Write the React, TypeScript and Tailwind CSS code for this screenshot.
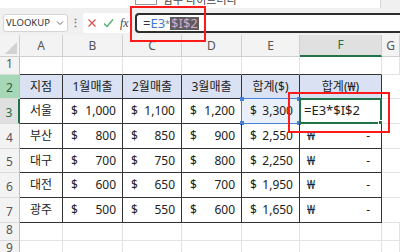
import React from 'react';

const colW = ['w-[20px]', 'w-[43px]', 'w-[60px]', 'w-[59px]', 'w-[60px]', 'w-[58px]', 'w-[82px]', 'w-[18px]'];
const letters = ['A', 'B', 'C', 'D', 'E', 'F', 'G'];

const headers = ['지점', '1월매출', '2월매출', '3월매출', '합계($)', '합계(₩)'];
const data = [
  ['서울', '1,000', '1,100', '1,200', '3,300'],
  ['부산', '800', '850', '900', '2,550'],
  ['대구', '700', '750', '800', '2,250'],
  ['대전', '600', '650', '700', '1,950'],
  ['광주', '500', '550', '600', '1,650'],
];
const rowH = ['h-[25px]', 'h-[25px]', 'h-[24px]', 'h-[25px]', 'h-[25px]'];

const RowHead = ({ n, h, active, green }: { n: number; h: string; active?: boolean; green?: boolean }) => (
  <div
    className={`${colW[0]} ${h} shrink-0 flex items-end justify-center pb-[1px] border-b border-[#dadada] text-[12px] ${
      active
        ? 'bg-[#e0e0e0] text-[#217346] border-r-2 border-r-[#217346]'
        : green
        ? 'bg-[#a6d8b8] text-[#2d5a3d] border-r border-r-[#bdbdbd]'
        : 'bg-[#f3f3f3] text-[#555] border-r border-r-[#bdbdbd]'
    }`}
  >
    {n}
  </div>
);

const Money = ({ v }: { v: string }) => (
  <div className="flex w-full justify-between pl-[8px] pr-[6px]">
    <span>$</span>
    <span>{v}</span>
  </div>
);

const EmptyRow = ({ n, h, dark }: { n: number; h: string; dark?: boolean }) => (
  <div className="flex">
    <RowHead n={n} h={h} />
    {colW.slice(1).map((w, i) => (
      <div
        key={i}
        className={`${w} ${h} shrink-0 border-r border-[#e3e3e3] border-b ${
          dark && i < 6 ? 'border-b-[#333]' : 'border-b-[#e3e3e3]'
        }`}
      />
    ))}
  </div>
);

export default function App() {
  return (
    <div className="relative w-[400px] h-[252px] overflow-hidden bg-white text-[#222] font-['Noto_Sans','Noto_Sans_CJK_KR',sans-serif]">
      {/* ribbon bottom strip */}
      <div className="flex h-[8px] bg-[#f0f0f0]">
        <div className="w-[381px] h-full bg-white border-r border-[#d6d6d6] relative overflow-hidden">
          <div className="absolute left-[135px] top-[-6px] w-[22px] h-[11px] border border-[#9a9a9a] bg-white" />
          <div className="absolute left-[163px] top-[-7px] text-[11px] leading-[14px] text-[#444]">함수 라이브러리</div>
        </div>
      </div>

      {/* formula bar */}
      <div className="flex h-[27px] bg-[#f0f0f0]">
        <div className="ml-[3px] mt-[6px] w-[65px] h-[18px] bg-white border border-[#d4d4d4] rounded-[3px] flex items-center justify-between pl-[2px] pr-[3px] text-[9.5px] text-[#333]">
          <span>VLOOKUP</span>
          <svg width="8" height="8" viewBox="0 0 8 8" fill="none" stroke="#666" strokeWidth="1">
            <path d="M1 2.5 L4 5.5 L7 2.5" />
          </svg>
        </div>
        <div className="w-[15px] mt-[6px] h-[18px] flex items-center justify-center text-[#777] text-[11px] font-bold">⋮</div>
        <div className="mt-[5px] w-[47px] h-[20px] bg-white rounded-[3px] flex items-center gap-[6px] pl-[4px]">
          <svg width="10" height="10" viewBox="0 0 10 10" stroke="#e05252" strokeWidth="1.3" fill="none">
            <path d="M1.5 1.5 L8.5 8.5 M8.5 1.5 L1.5 8.5" />
          </svg>
          <svg width="11" height="10" viewBox="0 0 11 10" stroke="#4caf6a" strokeWidth="1.3" fill="none">
            <path d="M1 5.5 L4 8.5 L10 1.5" />
          </svg>
          <span className="font-['Liberation_Serif',serif] italic text-[12px] text-[#444]">fx</span>
        </div>
        <div className="ml-[5px] mt-[5px] flex-1 h-[20px] bg-white border-2 border-[#2e2e2e] border-r-0 rounded-l-[4px] flex items-center pl-[6px] text-[13px] leading-none">
          <span className="text-[#333]">=</span>
          <span className="text-[#3b78d8]">E3</span>
          <span className="text-[#777] text-[9px]">*</span>
          <span className="bg-[#5d5d5d] text-[#d7a8cf] px-[1px]">$I$2</span>
        </div>
      </div>

      {/* column headers */}
      <div className="flex h-[22px] bg-[#f3f3f3]">
        <div className={`${colW[0]} h-full shrink-0 relative border-r border-b border-[#cfcfcf]`}>
          <div className="absolute right-[2px] bottom-[2px] w-0 h-0 border-l-[12px] border-l-transparent border-b-[12px] border-b-[#d2d2d2]" />
        </div>
        {letters.map((l, i) => (
          <div
            key={l}
            className={`${colW[i + 1]} h-full shrink-0 flex items-center justify-center text-[12px] ${
              l === 'F'
                ? 'bg-[#e0e0e0] text-[#217346] border-b-2 border-[#217346] border-r border-r-[#cfcfcf]'
                : 'text-[#555] border-r border-b border-[#cfcfcf]'
            }`}
          >
            {l}
          </div>
        ))}
      </div>

      {/* row 1 */}
      <EmptyRow n={1} h="h-[18px]" dark />

      {/* row 2 header */}
      <div className="flex">
        <RowHead n={2} h="h-[24px]" green />
        {headers.map((t, i) => (
          <div
            key={t}
            className={`${colW[i + 1]} h-[24px] shrink-0 flex items-center justify-center bg-[#d9e1f2] border-r border-b border-[#333] text-[12px]`}
          >
            {t}
          </div>
        ))}
        <div className={`${colW[7]} h-[24px] shrink-0 border-b border-[#e3e3e3]`} />
      </div>

      {/* data rows */}
      {data.map((r, ri) => (
        <div key={r[0]} className="flex">
          <RowHead n={ri + 3} h={rowH[ri]} active={ri === 0} />
          <div className={`${colW[1]} ${rowH[ri]} shrink-0 flex items-center justify-center border-r border-b border-[#333] text-[12px]`}>
            {r[0]}
          </div>
          {r.slice(1).map((v, ci) => (
            <div
              key={ci}
              className={`${colW[ci + 2]} ${rowH[ri]} shrink-0 relative flex items-center border-r border-b border-[#333] text-[12px] ${
                ri === 0 && ci === 3 ? 'bg-[#eaf0fa]' : ''
              }`}
            >
              <Money v={v} />
              {ri === 0 && ci === 3 && (
                <div className="absolute inset-[-1px] border border-[#4a7fd6]">
                  <div className="absolute left-[-2px] top-[-2px] w-[4px] h-[4px] bg-[#4a7fd6]" />
                  <div className="absolute right-[-2px] top-[-2px] w-[4px] h-[4px] bg-[#4a7fd6]" />
                  <div className="absolute left-[-2px] bottom-[-2px] w-[4px] h-[4px] bg-[#4a7fd6]" />
                  <div className="absolute right-[-2px] bottom-[-2px] w-[4px] h-[4px] bg-[#4a7fd6]" />
                </div>
              )}
            </div>
          ))}
          <div className={`${colW[6]} ${rowH[ri]} shrink-0 relative flex items-center border-r border-b border-[#333] text-[12px]`}>
            {ri === 0 ? (
              <>
                <span className="pl-[4px] text-[13px]">=E3*$I$2</span>
                <div className="absolute inset-[-1px] border-2 border-[#217346]">
                  <div className="absolute right-[-3px] bottom-[-3px] w-[5px] h-[5px] bg-[#217346] border border-white" />
                </div>
              </>
            ) : (
              <div className="flex w-full justify-between pl-[7px] pr-[11px]">
                <span>₩</span>
                <span>-</span>
              </div>
            )}
          </div>
          <div className={`${colW[7]} ${rowH[ri]} shrink-0 border-b border-[#e3e3e3]`} />
        </div>
      ))}

      <EmptyRow n={8} h="h-[18px]" />
      <EmptyRow n={9} h="h-[18px]" />

      {/* red callouts */}
      <div className="absolute left-[130px] top-[6px] w-[76px] h-[36px] border-2 border-[#ff1a1a]" />
      <div className="absolute left-[288px] top-[92px] w-[102px] h-[41px] border-2 border-[#ff1a1a]" />
    </div>
  );
}
